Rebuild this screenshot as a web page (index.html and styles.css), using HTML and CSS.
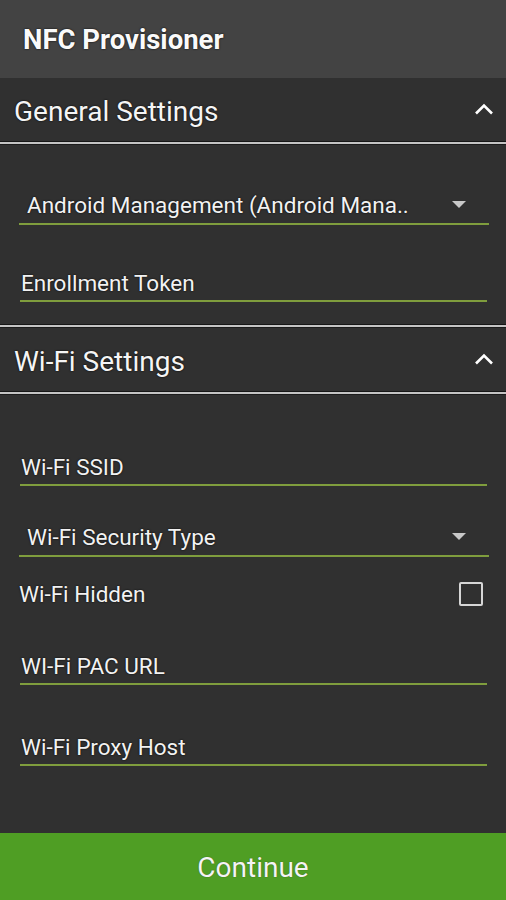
FILE: index.html
```html
<!doctype html>
<html lang="en">
<head>
  <meta charset="UTF-8">
  <meta name="viewport" content="width=device-width, initial-scale=1.0">
  <title>NFC Provisioner</title>
  <link rel="stylesheet" href="styles.css">
</head>
<body>

<div class="appbar">NFC Provisioner</div>

<div class="section-header">
  <span>General Settings</span>
  <svg class="chevron" width="20" height="12" viewBox="0 0 20 12"><path d="M2 10.5 L10 2.5 L18 10.5" fill="none" stroke="#fff" stroke-width="2.6"/></svg>
</div>
<div class="divider"></div>

<div class="section general">
  <div class="field spinner">
    <span>Android Management (Android Mana..</span>
    <span class="arrow"></span>
  </div>
  <div class="field edit">Enrollment Token</div>
</div>
<div class="divider"></div>

<div class="section-header">
  <span>Wi-Fi Settings</span>
  <svg class="chevron" width="20" height="12" viewBox="0 0 20 12"><path d="M2 10.5 L10 2.5 L18 10.5" fill="none" stroke="#fff" stroke-width="2.6"/></svg>
</div>
<div class="divider"></div>

<div class="section wifi">
  <div class="field edit">Wi-Fi SSID</div>
  <div class="field spinner gap-wifi">
    <span>Wi-Fi Security Type</span>
    <span class="arrow"></span>
  </div>
  <div class="check-row">
    <span>Wi-Fi Hidden</span>
    <span class="checkbox"></span>
  </div>
  <div class="field edit">WI-Fi PAC URL</div>
  <div class="field edit gap-proxy">Wi-Fi Proxy Host</div>
</div>

<button class="continue">Continue</button>

</body>
</html>
```

FILE: styles.css
```css
body {
  margin: 0;
  background-color: #303030;
  font-family: Roboto, 'Noto Sans', sans-serif;
  color: #f2f2f2;
  height: 900px;
  display: flex;
  flex-direction: column;
  overflow: hidden;
}

.appbar {
  height: 78px;
  line-height: 80px;
  padding-left: 23px;
  background-color: #434343;
  font-size: 27.5px;
  font-weight: bold;
  color: #fafafa;
  text-shadow: 0 0 2px #000;
}

.section-header {
  height: 63px;
  display: flex;
  align-items: center;
  justify-content: space-between;
  padding: 0 12px 0 14px;
  font-size: 28px;
  color: #f5f5f5;
  text-shadow: 0 0 2px #000;
}

.section-header span {
  margin-top: 4px;
}

.chevron {
  margin-top: -2px;
}

.divider {
  height: 2px;
  background-color: #c4c4c4;
  border-top: 1px solid #161616;
  border-bottom: 1px solid #1c1c1c;
}

.section {
  display: flex;
  flex-direction: column;
}

.general {
  padding: 42px 0 22px;
}

.wifi {
  padding: 53px 0 0;
  flex: 1;
}

.field {
  height: 36px;
  line-height: 38px;
  font-size: 22.5px;
  border-bottom: 2px solid #7f9d3d;
  text-shadow: 0 0 2px #000;
  white-space: nowrap;
}

.edit {
  margin: 0 19px 0 20px;
  padding-left: 1px;
}

.spinner {
  margin: 0 17px 0 19px;
  padding: 0 23px 0 8px;
  display: flex;
  align-items: center;
  justify-content: space-between;
}

.field + .field {
  margin-top: 39px;
}

.field.gap-wifi {
  margin-top: 33px;
}

.field.gap-proxy {
  margin-top: 43px;
}

.arrow {
  width: 0;
  height: 0;
  border-left: 7px solid transparent;
  border-right: 7px solid transparent;
  border-top: 7px solid #c8c8c8;
  margin-top: -2px;
}

.check-row {
  height: 36px;
  margin: 19px 23px 35px 19px;
  display: flex;
  align-items: center;
  justify-content: space-between;
  font-size: 22.5px;
  text-shadow: 0 0 2px #000;
}

.checkbox {
  width: 20px;
  height: 20px;
  border: 2.5px solid #d6d6d6;
  border-radius: 2px;
}

.continue {
  height: 67px;
  border: none;
  background-color: #4f9e24;
  color: #f4f4f4;
  font-family: Roboto, 'Noto Sans', sans-serif;
  font-size: 28px;
  padding: 2px 0 0;
  margin: 0;
  text-shadow: 0 0 1px #2a4a10;
}
```
